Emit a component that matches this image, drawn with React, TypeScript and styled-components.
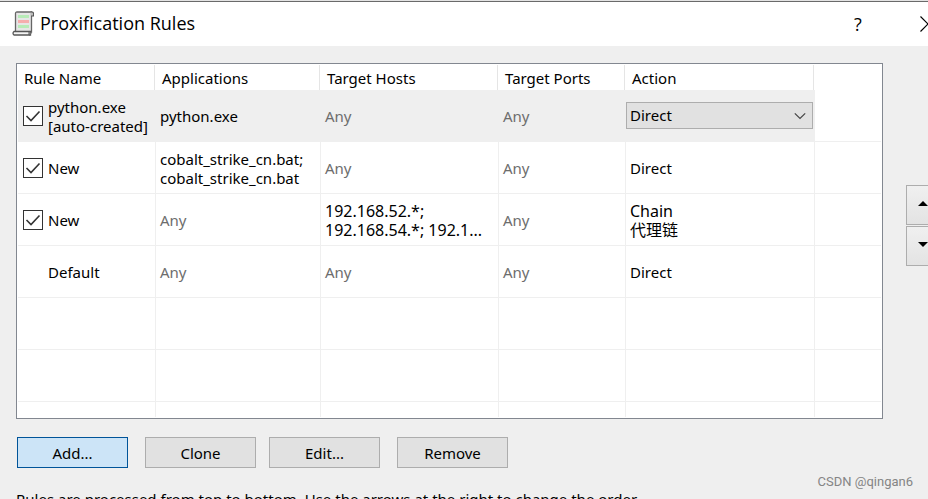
import React from "react";
import styled, { createGlobalStyle, css } from "styled-components";

const GlobalStyle = createGlobalStyle`
  * { box-sizing: border-box; }
  html, body { margin: 0; background: #efefef; }
  body {
    overflow: hidden;
    color: #000;
    font: 15px/19px "Noto Sans", "Noto Sans CJK SC", sans-serif;
  }
  button, select, input { font: inherit; color: inherit; margin: 0; }
`;

const Dialog = styled.div`
  position: relative;
  min-height: 100vh;
  overflow: hidden;
  border-top: 1px solid #e3e3e3;
`;

const TitleBar = styled.header`
  display: flex;
  align-items: center;
  height: 45px;
  padding-left: 12px;
  background: #fff;
  border-top: 1px solid #6a6a6a;
`;

const Title = styled.h1`
  flex: 1;
  margin: 0 0 0 6px;
  padding-bottom: 2px;
  font: 400 18px/26px "Open Sans", sans-serif;
`;

const CaptionButton = styled.button`
  display: flex;
  align-items: center;
  flex: none;
  width: 20px;
  height: 30px;
  padding: 0;
  border: 0;
  background: none;
  font: 18px/26px "Open Sans", sans-serif;
  justify-content: center;
`;

const CloseButton = styled(CaptionButton)`
  width: 8px;
  margin-left: 52px;
  overflow: hidden;
  justify-content: flex-start;
  svg { flex: none; }
`;

const Body = styled.main`
  padding: 17px 0 0 16px;
`;

const ListArea = styled.div`
  display: grid;
  grid-template-columns: minmax(0, 1fr) 22px;
  column-gap: 23px;
`;

const TableFrame = styled.div`
  padding: 1px;
  background: #fff;
  border: 1px solid #828790;
`;

const Table = styled.table`
  width: 100%;
  table-layout: fixed;
  border-collapse: separate;
  border-spacing: 0;
`;

const Col = styled.col<{ $w?: number }>`
  ${(p) => p.$w && css`width: ${p.$w}px;`}
`;

const HeadCell = styled.th`
  height: 25px;
  padding: 2px 6px 0;
  font-weight: 400;
  text-align: left;
  white-space: nowrap;
  background: linear-gradient(#e5e5e5, #e5e5e5) no-repeat right 1px top / 1px 100%;
  &:last-child { background: none; }
`;

const Cell = styled.td<{ $large?: boolean }>`
  height: 52px;
  padding: 2px 4px 0;
  ${(p) => p.$large && css`font-size: 16px;`}
  vertical-align: middle;
  border-right: 1px solid #efefef;
  border-bottom: 1px solid #efefef;
  white-space: nowrap;
  &:last-child { border-right: 0; }
`;

const Row = styled.tr<{ $selected?: boolean; $short?: boolean }>`
  ${(p) => p.$selected && css`
    ${Cell}:not(:last-child) { background: #efefef; }
  `}
  ${(p) => p.$short && css`
    ${Cell} { height: 15px; padding: 0; border-bottom: 0; }
  `}
`;

const Muted = styled.span`
  color: #6d6d6d;
`;

const RuleLabel = styled.label`
  display: flex;
  align-items: center;
  gap: 5px;
  padding-left: 1px;
`;

const CheckSlot = styled.span`
  position: relative;
  flex: none;
  width: 20px;
  height: 22px;
  svg { position: absolute; left: 0; top: 0; pointer-events: none; }
`;

const CheckBox = styled.input`
  appearance: none;
  display: block;
  width: 20px;
  height: 20px;
  background: #fff;
  border: 1px solid #333;
  & + svg { visibility: hidden; }
  &:checked + svg { visibility: visible; }
`;

const SelectCell = styled(Cell)`
  padding: 0 1px 0 0;
`;

const SelectBox = styled.div`
  position: relative;
  svg { position: absolute; right: 7px; top: 10px; pointer-events: none; }
`;

const Select = styled.select`
  appearance: none;
  display: block;
  width: 100%;
  height: 27px;
  padding: 0 24px 0 3px;
  background: #e1e1e1;
  border: 1px solid #adadad;
  border-radius: 0;
`;

const Arrows = styled.div`
  display: flex;
  flex-direction: column;
  gap: 1px;
  padding-top: 122px;
`;

const ArrowButton = styled.button`
  display: flex;
  align-items: center;
  justify-content: center;
  flex: none;
  width: 34px;
  height: 40px;
  padding: 0 0 3px;
  background: linear-gradient(#f0f0f0, #e3e3e3);
  border: 1px solid #adadad;
`;

const Buttons = styled.div`
  display: flex;
  gap: 13px;
  padding: 18px 0 0 1px;
`;

const ButtonPair = styled.div`
  display: flex;
  gap: 17px;
`;

const Button = styled.button<{ $primary?: boolean }>`
  width: 111px;
  height: 31px;
  padding: 1px 0 0;
  background: ${(p) => (p.$primary ? "#cce4f7" : "#e1e1e1")};
  border: 1px solid ${(p) => (p.$primary ? "#005499" : "#adadad")};
`;

const Hint = styled.p`
  margin: 22px 0 0;
  white-space: nowrap;
`;

const Watermark = styled.div`
  position: absolute;
  right: 15px;
  top: 473px;
  color: #858585;
  font: 13px/16px Roboto, sans-serif;
`;

const ScrollIcon = () => (
  <svg width="22" height="26" viewBox="0 0 22 26" aria-hidden="true">
    <path d="M3.500 2.500c0-1 .5-1.500 1.500-1.500h14.500v20H3.500z" fill="#e6e6e6" stroke="#666" strokeWidth="1.300" />
    <path d="M18.500 1h1.500c1.500 0 2 1.500 1.500 4h-2.500" fill="#bbb" stroke="#555" strokeWidth="1.200" />
    <path d="M2 20.500h16.500v3.500H2c-1.300-1-1.300-2.500 0-3.500z" fill="#f4f4f4" stroke="#555" strokeWidth="1.300" />
    <path d="M17 24c2.500 0 2.500-3.500 0-3.500z" fill="#aaa" stroke="#555" />
    <path d="M6 4h11v3H6zM6 14h11v3H6z" fill="#b7ebb7" />
    <path d="M6 9h11v3H6z" fill="#f6adad" />
  </svg>
);

const Tick = () => (
  <svg width="20" height="20" viewBox="0 0 20 20" aria-hidden="true">
    <path d="M3.500 10l4.500 4.500L16.500 5.500" fill="none" stroke="#333" strokeWidth="1.600" />
  </svg>
);

const Chevron = () => (
  <svg width="12" height="8" viewBox="0 0 12 8" aria-hidden="true">
    <path d="M.8 1.300L6 6.500l5.200-5.200" fill="none" stroke="#444" strokeWidth="1.200" />
  </svg>
);

const Cross = () => (
  <svg width="16" height="16" viewBox="0 0 16 16" aria-hidden="true">
    <path d="M.5 .5l15 15M15.500 .5l-15 15" stroke="#000" strokeWidth="1.200" />
  </svg>
);

const Triangle = ({ down }: { down?: boolean }) => (
  <svg width="10" height="5" viewBox="0 0 10 5" aria-hidden="true">
    <path d={down ? "M0 0h10L5 5z" : "M0 5h10L5 0z"} fill="#000" />
  </svg>
);

type Rule = {
  name: string[];
  checkable?: boolean;
  apps?: string[];
  hosts?: string[];
  action: string[];
  editing?: boolean;
};

const rules: Rule[] = [
  { name: ["python.exe", "[auto-created]"], checkable: true, apps: ["python.exe"], action: ["Direct"], editing: true },
  { name: ["New"], checkable: true, apps: ["cobalt_strike_cn.bat;", "cobalt_strike_cn.bat"], action: ["Direct"] },
  { name: ["New"], checkable: true, hosts: ["192.168.52.*;", "192.168.54.*; 192.1..."], action: ["Chain", "代理链"] },
  { name: ["Default"], action: ["Direct"] },
];

const Line = styled.div``;

const Lines = ({ text }: { text?: string[] }) =>
  text ? (
    <>
      {text.map((line) => (
        <Line key={line}>{line}</Line>
      ))}
    </>
  ) : (
    <Muted>Any</Muted>
  );

const columns = ["Rule Name", "Applications", "Target Hosts", "Target Ports", "Action", ""];

export default function App() {
  return (
    <Dialog>
      <GlobalStyle />
      <TitleBar>
        <ScrollIcon />
        <Title>Proxification Rules</Title>
        <CaptionButton aria-label="Help">?</CaptionButton>
        <CloseButton aria-label="Close"><Cross /></CloseButton>
      </TitleBar>
      <Body>
        <ListArea>
          <TableFrame>
            <Table>
              <colgroup>
                <Col $w={138} />
                <Col $w={165} />
                <Col $w={178} />
                <Col $w={127} />
                <Col $w={189} />
                <Col />
              </colgroup>
              <thead>
                <tr>
                  {columns.map((c) => (
                    <HeadCell key={c} scope="col">{c}</HeadCell>
                  ))}
                </tr>
              </thead>
              <tbody>
                {rules.map((rule, i) => (
                  <Row key={i} $selected={rule.editing}>
                    <Cell>
                      <RuleLabel>
                        <CheckSlot>
                          {rule.checkable && (
                            <>
                              <CheckBox type="checkbox" defaultChecked />
                              <Tick />
                            </>
                          )}
                        </CheckSlot>
                        <span><Lines text={rule.name} /></span>
                      </RuleLabel>
                    </Cell>
                    <Cell><Lines text={rule.apps} /></Cell>
                    <Cell $large={!!rule.hosts}><Lines text={rule.hosts} /></Cell>
                    <Cell><Lines /></Cell>
                    {rule.editing ? (
                      <SelectCell>
                        <SelectBox>
                          <Select aria-label="Action" defaultValue="Direct">
                            <option>Direct</option>
                          </Select>
                          <Chevron />
                        </SelectBox>
                      </SelectCell>
                    ) : (
                      <Cell $large={rule.action.length > 1}><Lines text={rule.action} /></Cell>
                    )}
                    <Cell />
                  </Row>
                ))}
                {[false, false, true].map((short, i) => (
                  <Row key={i} $short={short}>
                    {columns.map((c) => (
                      <Cell key={c} />
                    ))}
                  </Row>
                ))}
              </tbody>
            </Table>
          </TableFrame>
          <Arrows>
            <ArrowButton aria-label="Move up"><Triangle /></ArrowButton>
            <ArrowButton aria-label="Move down"><Triangle down /></ArrowButton>
          </Arrows>
        </ListArea>
        <Buttons>
          <ButtonPair>
            <Button $primary>Add...</Button>
            <Button>Clone</Button>
          </ButtonPair>
          <ButtonPair>
            <Button>Edit...</Button>
            <Button>Remove</Button>
          </ButtonPair>
        </Buttons>
        <Hint>Rules are processed from top to bottom. Use the arrows at the right to change the order.</Hint>
      </Body>
      <Watermark>CSDN @qingan6</Watermark>
    </Dialog>
  );
}
